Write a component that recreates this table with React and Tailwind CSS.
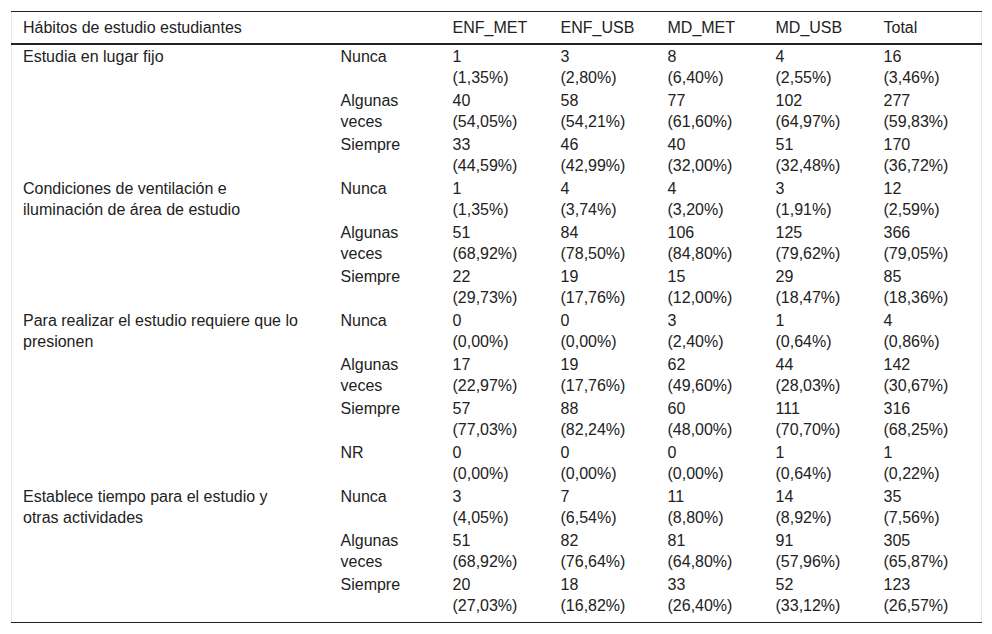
const groups = [
  {
    label: ["Estudia en lugar fijo"],
    rows: [
      ["Nunca", ["1", "(1,35%)"], ["3", "(2,80%)"], ["8", "(6,40%)"], ["4", "(2,55%)"], ["16", "(3,46%)"]],
      [["Algunas", "veces"], ["40", "(54,05%)"], ["58", "(54,21%)"], ["77", "(61,60%)"], ["102", "(64,97%)"], ["277", "(59,83%)"]],
      ["Siempre", ["33", "(44,59%)"], ["46", "(42,99%)"], ["40", "(32,00%)"], ["51", "(32,48%)"], ["170", "(36,72%)"]],
    ],
  },
  {
    label: ["Condiciones de ventilación e", "iluminación de área de estudio"],
    rows: [
      ["Nunca", ["1", "(1,35%)"], ["4", "(3,74%)"], ["4", "(3,20%)"], ["3", "(1,91%)"], ["12", "(2,59%)"]],
      [["Algunas", "veces"], ["51", "(68,92%)"], ["84", "(78,50%)"], ["106", "(84,80%)"], ["125", "(79,62%)"], ["366", "(79,05%)"]],
      ["Siempre", ["22", "(29,73%)"], ["19", "(17,76%)"], ["15", "(12,00%)"], ["29", "(18,47%)"], ["85", "(18,36%)"]],
    ],
  },
  {
    label: ["Para realizar el estudio requiere que lo", "presionen"],
    rows: [
      ["Nunca", ["0", "(0,00%)"], ["0", "(0,00%)"], ["3", "(2,40%)"], ["1", "(0,64%)"], ["4", "(0,86%)"]],
      [["Algunas", "veces"], ["17", "(22,97%)"], ["19", "(17,76%)"], ["62", "(49,60%)"], ["44", "(28,03%)"], ["142", "(30,67%)"]],
      ["Siempre", ["57", "(77,03%)"], ["88", "(82,24%)"], ["60", "(48,00%)"], ["111", "(70,70%)"], ["316", "(68,25%)"]],
      ["NR", ["0", "(0,00%)"], ["0", "(0,00%)"], ["0", "(0,00%)"], ["1", "(0,64%)"], ["1", "(0,22%)"]],
    ],
  },
  {
    label: ["Establece tiempo para el estudio y", "otras actividades"],
    rows: [
      ["Nunca", ["3", "(4,05%)"], ["7", "(6,54%)"], ["11", "(8,80%)"], ["14", "(8,92%)"], ["35", "(7,56%)"]],
      [["Algunas", "veces"], ["51", "(68,92%)"], ["82", "(76,64%)"], ["81", "(64,80%)"], ["91", "(57,96%)"], ["305", "(65,87%)"]],
      ["Siempre", ["20", "(27,03%)"], ["18", "(16,82%)"], ["33", "(26,40%)"], ["52", "(33,12%)"], ["123", "(26,57%)"]],
    ],
  },
];

function Lines({ value }) {
  const list = Array.isArray(value) ? value : [value];
  return list.map((l, i) => (
    <span key={i} className="block">
      {l}
    </span>
  ));
}

export default function App() {
  return (
    <div
      className="w-[992px] h-[634px] bg-white pt-[11px] px-[11px] text-[16px] leading-[21px] text-[#222]"
      style={{ fontFamily: '"Liberation Sans", Arial, sans-serif' }}
    >
      <table className="w-[970px] border-collapse table-fixed border-x border-x-[#e8e8e8]">
        <colgroup>
          <col className="w-[319px]" />
          <col className="w-[112px]" />
          <col className="w-[108px]" />
          <col className="w-[107px]" />
          <col className="w-[108px]" />
          <col className="w-[108px]" />
          <col className="w-[108px]" />
        </colgroup>
        <thead>
          <tr className="border-t border-t-[#222] border-b-2 border-b-[#222] text-left leading-[22px]">
            <th className="font-normal pl-[11px] pt-[5px] pb-[4px] align-top">Hábitos de estudio estudiantes</th>
            <th className="font-normal pl-[10px] pt-[5px] pb-[4px]"></th>
            <th className="font-normal pl-[10px] pt-[5px] pb-[4px] align-top">ENF_MET</th>
            <th className="font-normal pl-[10px] pt-[5px] pb-[4px] align-top">ENF_USB</th>
            <th className="font-normal pl-[10px] pt-[5px] pb-[4px] align-top">MD_MET</th>
            <th className="font-normal pl-[10px] pt-[5px] pb-[4px] align-top">MD_USB</th>
            <th className="font-normal pl-[10px] pt-[5px] pb-[4px] align-top">Total</th>
          </tr>
        </thead>
        <tbody className="border-b border-b-[#222]">
          {groups.map((g, gi) =>
            g.rows.map((r, ri) => {
              const last = gi === groups.length - 1 && ri === g.rows.length - 1;
              const pad = last ? "pt-[1px] pb-[6px]" : "py-[1px]";
              return (
                <tr key={gi + "-" + ri}>
                  {ri === 0 && (
                    <td rowSpan={g.rows.length} className="pl-[11px] pr-[10px] py-[1px] align-top">
                      <Lines value={g.label} />
                    </td>
                  )}
                  {r.map((c, ci) => (
                    <td key={ci} className={"pl-[10px] align-top " + pad}>
                      <Lines value={c} />
                    </td>
                  ))}
                </tr>
              );
            })
          )}
        </tbody>
      </table>
    </div>
  );
}
